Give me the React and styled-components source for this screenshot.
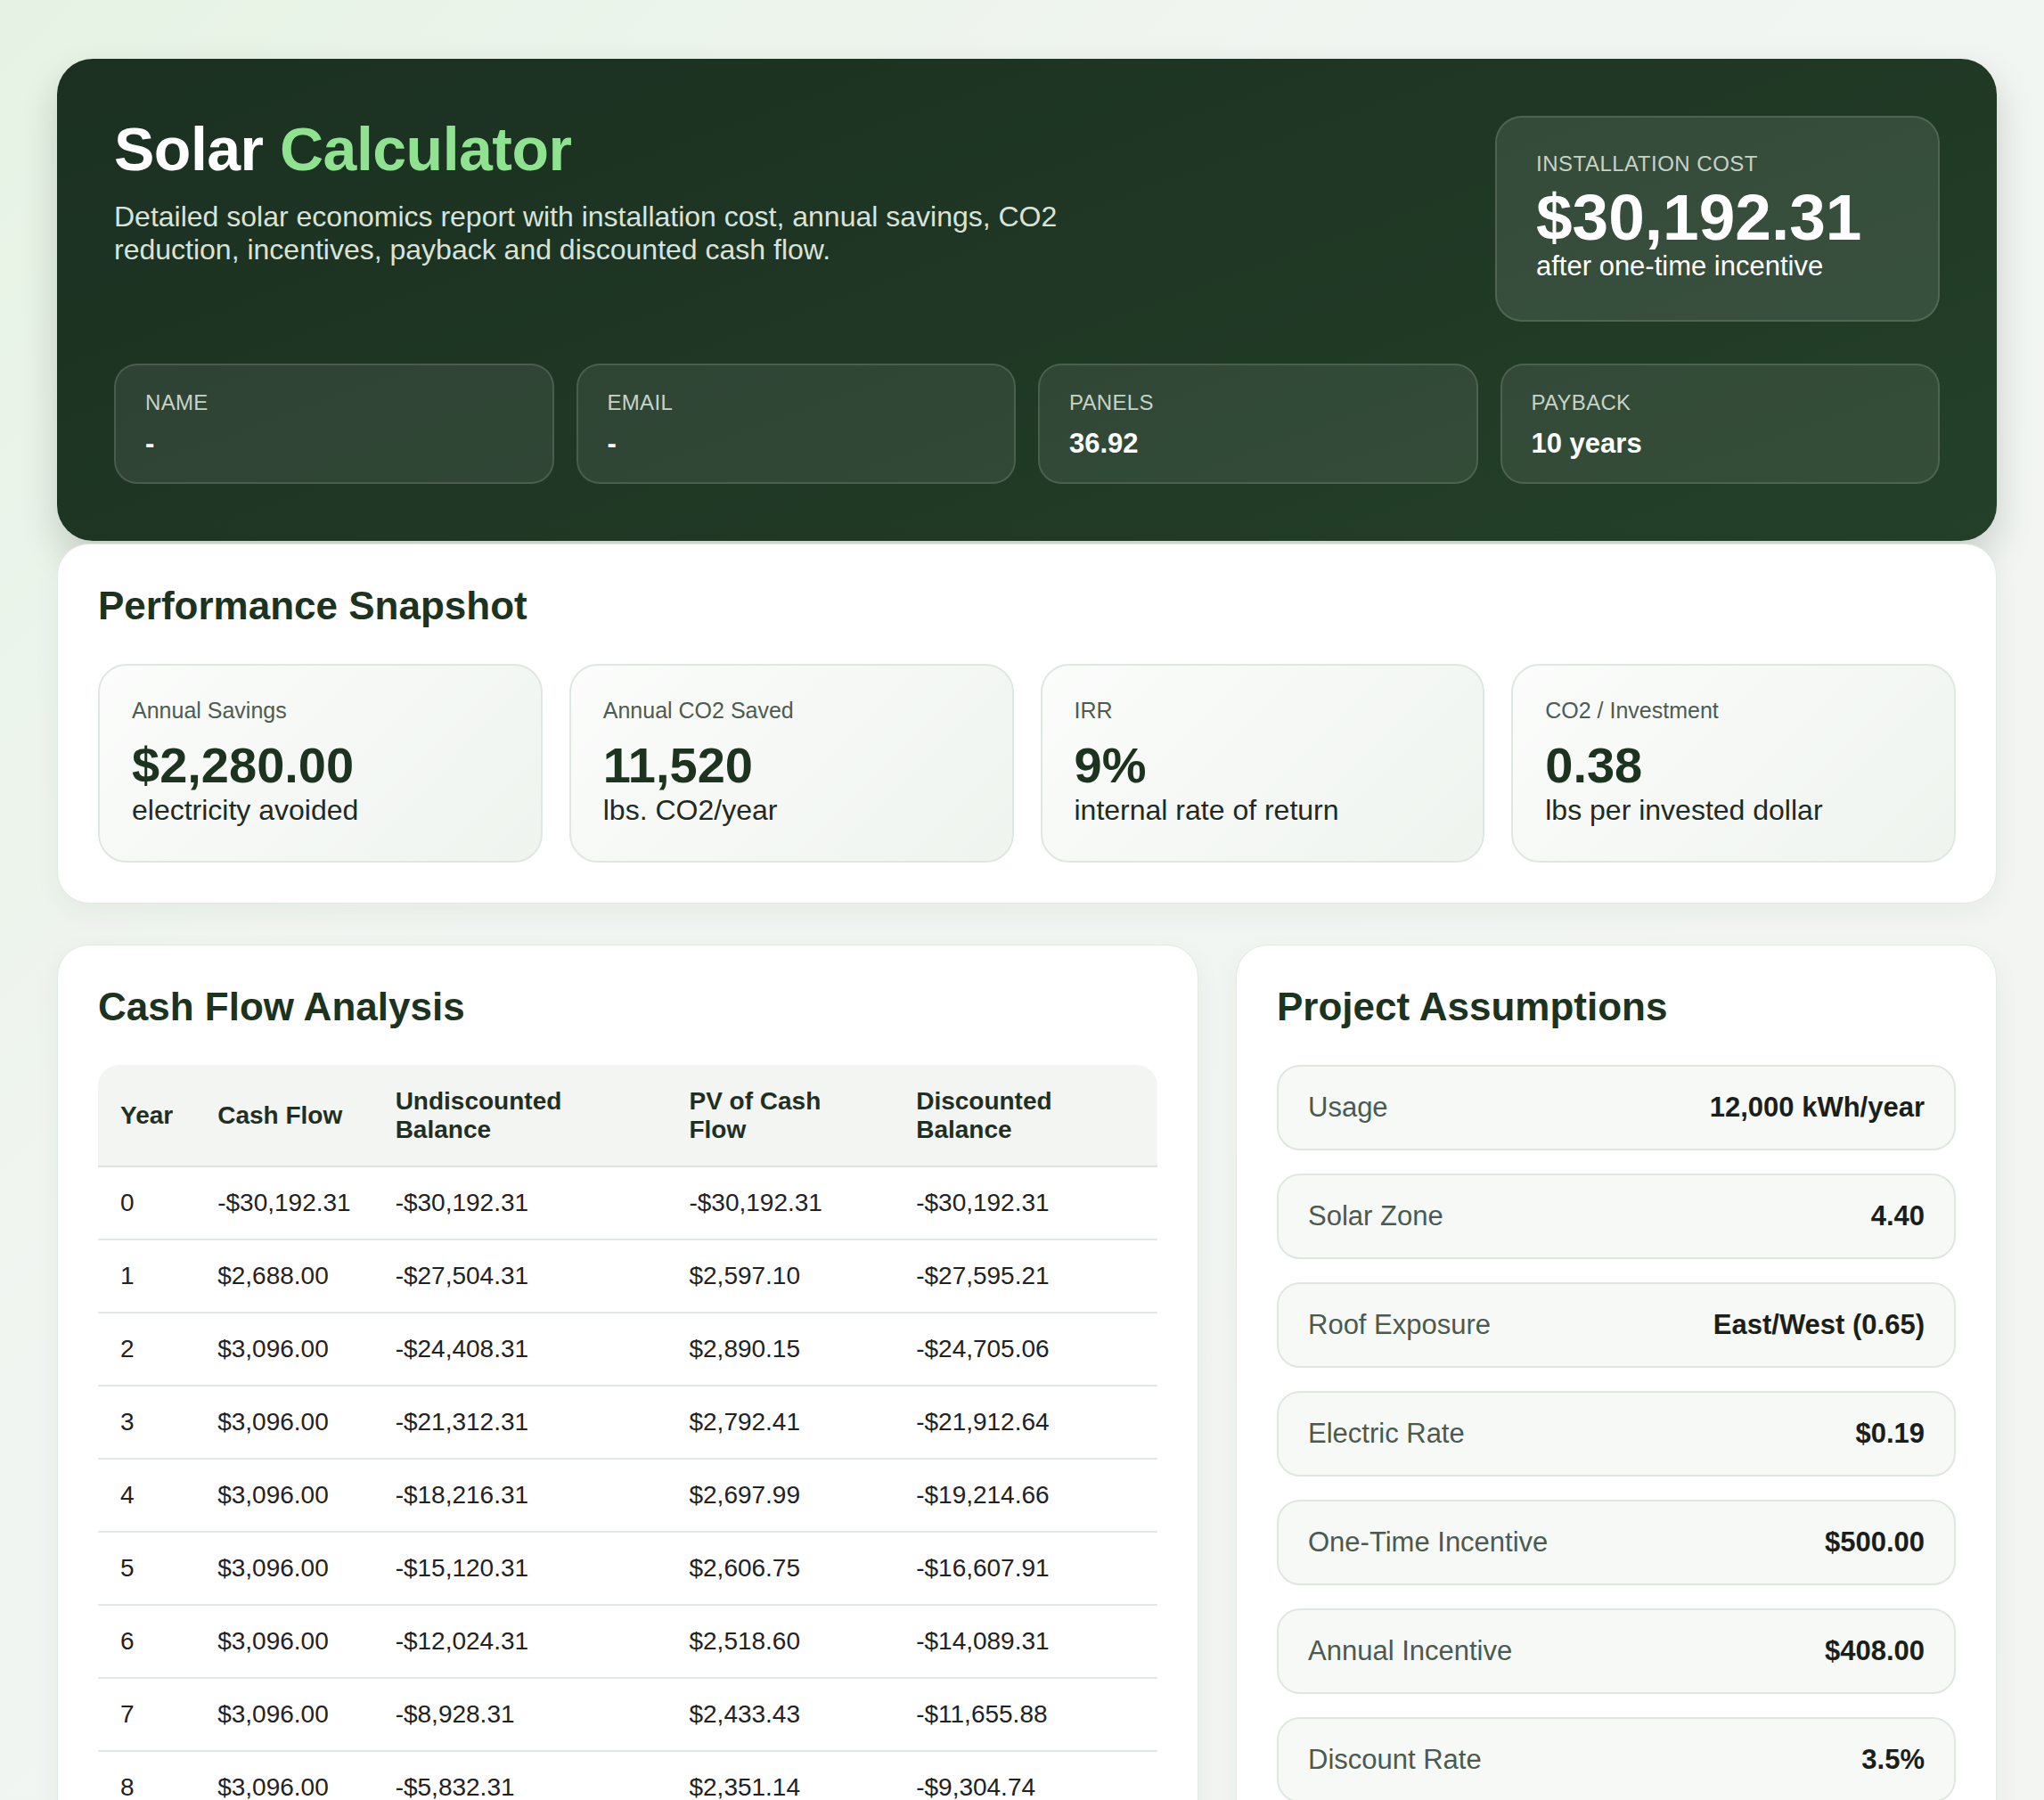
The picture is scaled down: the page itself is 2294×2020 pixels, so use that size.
import React from 'react';
import styled, { createGlobalStyle } from 'styled-components';

const GlobalStyle = createGlobalStyle`
  * { box-sizing: border-box; }
  body {
    margin: 0;
    font-family: "Liberation Sans", Arial, sans-serif;
    background: linear-gradient(135deg, #e6f3e4 0%, #f1f5f1 35%, #f3f5f3 100%);
    min-height: 2020px;
  }
`;

const Page = styled.div`
  width: 2177px;
  margin: 0 0 0 64px;
  padding: 66px 0 60px;
`;

const Hero = styled.header`
  background: linear-gradient(160deg, #1b3021 0%, #1f3724 50%, #24402a 100%);
  border-radius: 40px;
  padding: 64px;
  color: #fff;
  box-shadow: 0 20px 40px rgba(20, 40, 25, 0.18);
`;

const HeroTop = styled.div`
  display: flex;
  justify-content: space-between;
  align-items: flex-start;
  min-height: 278px;
`;

const HeroText = styled.div`
  max-width: 1120px;
`;

const Title = styled.h1`
  margin: 0 0 20px;
  font-size: 68px;
  font-weight: 700;
  line-height: 1.1;
  letter-spacing: -0.5px;
  span { color: #8fe28f; }
`;

const Subtitle = styled.p`
  margin: 0;
  font-size: 32px;
  line-height: 37px;
  color: #d9e3d9;
`;

const CostCard = styled.div`
  width: 499px;
  height: 231px;
  border-radius: 30px;
  background: rgba(255, 255, 255, 0.1);
  border: 2px solid rgba(255, 255, 255, 0.13);
  padding: 38px 44px;
`;

const CostLabel = styled.div`
  font-size: 24px;
  letter-spacing: 0.5px;
  color: #c8d3c8;
`;

const CostValue = styled.div`
  font-size: 73px;
  font-weight: 700;
  line-height: 1.05;
  margin-top: 8px;
`;

const CostNote = styled.div`
  font-size: 31px;
  margin-top: -2px;
`;

const InfoRow = styled.div`
  display: grid;
  grid-template-columns: repeat(4, 1fr);
  gap: 25px;
`;

const InfoCard = styled.div`
  height: 135px;
  border-radius: 26px;
  background: rgba(255, 255, 255, 0.08);
  border: 2px solid rgba(255, 255, 255, 0.13);
  padding: 28px 33px;
`;

const InfoLabel = styled.div`
  font-size: 24px;
  color: #c8d3c8;
  letter-spacing: 0.3px;
`;

const InfoValue = styled.div`
  font-size: 31px;
  font-weight: 700;
  margin-top: 14px;
`;

const Panel = styled.section`
  background: #fff;
  border-radius: 36px;
  padding: 44px 45px 45px;
  border: 1px solid #e3e9e3;
  box-shadow: 0 10px 30px rgba(30, 60, 35, 0.05);
`;

const SnapshotPanel = styled(Panel)`
  margin-top: 3px;
`;

const PanelTitle = styled.h2`
  margin: 0 0 40px;
  font-size: 44px;
  font-weight: 700;
  color: #1c3320;
`;

const MetricGrid = styled.div`
  display: grid;
  grid-template-columns: repeat(4, 1fr);
  gap: 30px;
`;

const Metric = styled.div`
  height: 223px;
  border-radius: 32px;
  border: 2px solid #e0e7e1;
  background: linear-gradient(135deg, #fbfcfb 0%, #eff4ef 100%);
  padding: 36px 36px;
`;

const MetricLabel = styled.div`
  font-size: 25px;
  color: #4e5b52;
`;

const MetricValue = styled.div`
  font-size: 56px;
  font-weight: 700;
  color: #1c3320;
  margin-top: 18px;
  line-height: 1.05;
`;

const MetricNote = styled.div`
  font-size: 32px;
  color: #1f2a22;
  margin-top: 2px;
`;

const Columns = styled.div`
  display: grid;
  grid-template-columns: 1281px 1fr;
  gap: 42px;
  margin-top: 46px;
  align-items: start;
`;

const Table = styled.table`
  width: 100%;
  border-collapse: collapse;
  font-size: 28px;
  color: #222;
  th {
    background: #f3f5f3;
    text-align: left;
    font-weight: 700;
    color: #1f2f23;
    padding: 20px 25px;
    line-height: 32px;
    height: 114px;
    border-bottom: 2px solid #dde4de;
  }
  th:first-child { border-top-left-radius: 24px; }
  th:last-child { border-top-right-radius: 24px; }
  td {
    height: 82px;
    padding: 0 25px;
    border-bottom: 2px solid #e2e8e3;
  }
`;

const AssumptionList = styled.div`
  display: flex;
  flex-direction: column;
  gap: 26px;
`;

const Assumption = styled.div`
  height: 96px;
  display: flex;
  align-items: center;
  justify-content: space-between;
  padding: 0 33px;
  border-radius: 26px;
  background: #f7f9f7;
  border: 2px solid #e0e7e1;
  font-size: 31px;
`;

const AssumptionLabel = styled.span`
  color: #4b5a50;
`;

const AssumptionValue = styled.span`
  font-weight: 700;
  color: #1b1f1c;
`;

const info = [
  ['NAME', '-'],
  ['EMAIL', '-'],
  ['PANELS', '36.92'],
  ['PAYBACK', '10 years'],
];

const metrics = [
  ['Annual Savings', '$2,280.00', 'electricity avoided'],
  ['Annual CO2 Saved', '11,520', 'lbs. CO2/year'],
  ['IRR', '9%', 'internal rate of return'],
  ['CO2 / Investment', '0.38', 'lbs per invested dollar'],
];

const rows = [
  ['0', '-$30,192.31', '-$30,192.31', '-$30,192.31', '-$30,192.31'],
  ['1', '$2,688.00', '-$27,504.31', '$2,597.10', '-$27,595.21'],
  ['2', '$3,096.00', '-$24,408.31', '$2,890.15', '-$24,705.06'],
  ['3', '$3,096.00', '-$21,312.31', '$2,792.41', '-$21,912.64'],
  ['4', '$3,096.00', '-$18,216.31', '$2,697.99', '-$19,214.66'],
  ['5', '$3,096.00', '-$15,120.31', '$2,606.75', '-$16,607.91'],
  ['6', '$3,096.00', '-$12,024.31', '$2,518.60', '-$14,089.31'],
  ['7', '$3,096.00', '-$8,928.31', '$2,433.43', '-$11,655.88'],
  ['8', '$3,096.00', '-$5,832.31', '$2,351.14', '-$9,304.74'],
];

const assumptions = [
  ['Usage', '12,000 kWh/year'],
  ['Solar Zone', '4.40'],
  ['Roof Exposure', 'East/West (0.65)'],
  ['Electric Rate', '$0.19'],
  ['One-Time Incentive', '$500.00'],
  ['Annual Incentive', '$408.00'],
  ['Discount Rate', '3.5%'],
];

const colWidths = [107, 198, 332, 256, 298];

export default function App() {
  return (
    <Page>
      <GlobalStyle />
      <Hero>
        <HeroTop>
          <HeroText>
            <Title>Solar <span>Calculator</span></Title>
            <Subtitle>
              Detailed solar economics report with installation cost, annual savings, CO2
              reduction, incentives, payback and discounted cash flow.
            </Subtitle>
          </HeroText>
          <CostCard>
            <CostLabel>INSTALLATION COST</CostLabel>
            <CostValue>$30,192.31</CostValue>
            <CostNote>after one-time incentive</CostNote>
          </CostCard>
        </HeroTop>
        <InfoRow>
          {info.map(([label, value]) => (
            <InfoCard key={label}>
              <InfoLabel>{label}</InfoLabel>
              <InfoValue>{value}</InfoValue>
            </InfoCard>
          ))}
        </InfoRow>
      </Hero>

      <SnapshotPanel>
        <PanelTitle>Performance Snapshot</PanelTitle>
        <MetricGrid>
          {metrics.map(([label, value, note]) => (
            <Metric key={label}>
              <MetricLabel>{label}</MetricLabel>
              <MetricValue>{value}</MetricValue>
              <MetricNote>{note}</MetricNote>
            </Metric>
          ))}
        </MetricGrid>
      </SnapshotPanel>

      <Columns>
        <Panel>
          <PanelTitle>Cash Flow Analysis</PanelTitle>
          <Table>
            <colgroup>
              {colWidths.map((w, i) => <col key={i} style={{ width: w }} />)}
            </colgroup>
            <thead>
              <tr>
                <th>Year</th>
                <th>Cash Flow</th>
                <th>Undiscounted<br />Balance</th>
                <th>PV of Cash<br />Flow</th>
                <th>Discounted<br />Balance</th>
              </tr>
            </thead>
            <tbody>
              {rows.map((r) => (
                <tr key={r[0]}>
                  {r.map((c, i) => <td key={i}>{c}</td>)}
                </tr>
              ))}
            </tbody>
          </Table>
        </Panel>
        <Panel>
          <PanelTitle>Project Assumptions</PanelTitle>
          <AssumptionList>
            {assumptions.map(([label, value]) => (
              <Assumption key={label}>
                <AssumptionLabel>{label}</AssumptionLabel>
                <AssumptionValue>{value}</AssumptionValue>
              </Assumption>
            ))}
          </AssumptionList>
        </Panel>
      </Columns>
    </Page>
  );
}
